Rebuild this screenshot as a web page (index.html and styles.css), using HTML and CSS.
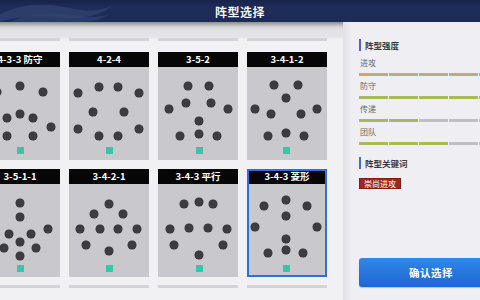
FILE: index.html
```html
<!DOCTYPE html>
<html lang="zh-CN">
<head>
<meta charset="UTF-8">
<meta name="viewport" content="width=device-width, initial-scale=1.0">
<title>阵型选择</title>
<link rel="stylesheet" href="styles.css">
</head>
<body>
<div class="topbar">
    <svg class="topbar-wave" width="140" height="22" viewBox="0 0 140 22">
        <path d="M0 14 C20 4 45 2 70 8 C90 13 100 10 112 6 C100 16 80 20 55 17 C35 15 15 17 0 22 Z" fill="#3a4b77" opacity="0.55"/>
        <path d="M10 22 C30 12 55 12 80 16 C95 18 105 16 110 14 C100 20 90 22 80 22 Z" fill="#33466f" opacity="0.6"/>
    </svg>
    <h1 class="topbar-title">阵型选择</h1>
</div>
<div class="main">
    <div class="formations">
        <div class="shelf-row">
            <div class="shelf"></div><div class="shelf"></div><div class="shelf"></div><div class="shelf"></div>
        </div>
        <div class="grid" id="grid"></div>
        <div class="shelf-row shelf-row-bottom">
            <div class="shelf"></div><div class="shelf"></div><div class="shelf"></div><div class="shelf"></div>
        </div>
    </div>
    <div class="panel">
        <div class="panel-title">阵型强度</div>
        <div class="stat">
            <div class="stat-label">进攻</div>
            <div class="bar bar-attack"><span class="on"></span><span class="on"></span><span class="on"></span><span class="on"></span><span class="on"></span></div>
        </div>
        <div class="stat">
            <div class="stat-label">防守</div>
            <div class="bar"><span class="on"></span><span class="on"></span><span class="on"></span><span class="on"></span><span class="on"></span></div>
        </div>
        <div class="stat">
            <div class="stat-label">传递</div>
            <div class="bar"><span class="on"></span><span class="on"></span><span></span><span></span><span></span></div>
        </div>
        <div class="stat">
            <div class="stat-label">团队</div>
            <div class="bar"><span class="on"></span><span class="on"></span><span class="on"></span><span></span><span></span></div>
        </div>
        <div class="panel-title panel-title-keys">阵型关键词</div>
        <div class="tags"><span class="tag">崇尚进攻</span></div>
        <button class="confirm">确认选择</button>
    </div>
</div>
<script>

var formations = [
    { name: '4-3-3 防守', gk: [40, 98], players: [[17,40],[40,34],[63,40],[27,66],[40,62],[53,66],[9,75],[27,84],[53,84],[71,75]] },
    { name: '4-2-4', gk: [40, 98], players: [[9,41],[30,35],[49,35],[70,41],[24,60],[55,60],[9,77],[30,84],[49,84],[70,77]] },
    { name: '3-5-2', gk: [41, 98], players: [[30,34],[51,34],[28,51],[53,51],[11,57],[70,57],[41,69],[22,84],[41,82],[59,84]] },
    { name: '3-4-1-2', gk: [39, 98], players: [[27,33],[51,33],[39,46],[8,57],[24,62],[54,62],[70,57],[21,84],[39,81],[57,84]] },
    { name: '3-5-1-1', gk: [40, 99], players: [[40,34],[40,48],[12,60],[68,60],[29,65],[51,65],[40,73],[24,79],[56,79],[40,87]] },
    { name: '3-4-2-1', gk: [40, 99], players: [[40,35],[25,45],[54,45],[11,60],[31,60],[49,60],[68,60],[17,76],[63,76],[40,82]] },
    { name: '3-4-3 平行', gk: [41, 99], players: [[26,35],[41,33],[55,35],[12,60],[31,59],[50,59],[69,60],[16,76],[65,76],[41,86]] },
    { name: '3-4-3 菱形', gk: [39, 99], selected: true, players: [[17,37],[39,31],[60,37],[39,47],[8,58],[70,58],[39,70],[21,84],[39,81],[56,84]] }
];

var grid = document.getElementById('grid');

formations.forEach(function(f) {
    var card = document.createElement('div');
    card.className = 'card' + (f.selected ? ' selected' : '');

    var head = document.createElement('div');
    head.className = 'card-head';
    head.textContent = f.name;
    card.appendChild(head);

    var pitch = document.createElement('div');
    pitch.className = 'pitch';

    // positions are measured from the card's top-left, header is 15px
    f.players.forEach(function(p) {
        var dot = document.createElement('span');
        dot.className = 'player';
        dot.style.left = (p[0] - 4) + 'px';
        dot.style.top = (p[1] - 15 - 4) + 'px';
        pitch.appendChild(dot);
    });

    var gk = document.createElement('span');
    gk.className = 'keeper';
    gk.style.left = (f.gk[0] - 3.5) + 'px';
    gk.style.top = (f.gk[1] - 15 - 3.5) + 'px';
    pitch.appendChild(gk);

    card.appendChild(pitch);
    grid.appendChild(card);
});

</script>
</body>
</html>
```
FILE: styles.css
```css
body {
    margin: 0;
    width: 480px;
    height: 300px;
    overflow: hidden;
    font-family: "Noto Sans CJK SC", "Noto Sans", sans-serif;
    background-color: #eeeef1;
    display: flex;
    flex-direction: column;
}

.topbar {
    height: 22px;
    background: linear-gradient(#16234a, #1d2d58 30%, #1c2c57);
    position: relative;
    display: flex;
    align-items: center;
    justify-content: center;
    flex-shrink: 0;
}

.topbar-wave {
    position: absolute;
    left: 0;
    top: 0;
}

.topbar-title {
    margin: 0;
    font-size: 12px;
    font-weight: bold;
    color: #f4f6fb;
    letter-spacing: 0.5px;
    text-shadow: 0 0 2px rgba(0, 0, 0, 0.6);
    position: relative;
}

.main {
    flex: 1;
    display: flex;
    min-height: 0;
}

.formations {
    width: 343px;
    flex-shrink: 0;
    overflow: hidden;
    background: linear-gradient(#8f8d92, #d6d6da 5px, #e2e2e5 8px, #e4e4e7 15px, #f1f1f4 17px);
}

.shelf-row {
    display: flex;
    gap: 9px;
    margin-left: -20px;
    margin-top: 16px;
}

.shelf-row-bottom {
    margin-top: 8px;
}

.shelf {
    width: 80px;
    height: 3px;
    background-color: #d4d4d8;
    flex-shrink: 0;
}

.grid {
    display: grid;
    grid-template-columns: repeat(4, 80px);
    column-gap: 9px;
    row-gap: 9px;
    margin-left: -20px;
    margin-top: 11px;
}

.card {
    height: 108px;
    background-color: #c9c9cd;
    display: flex;
    flex-direction: column;
    position: relative;
}

.card.selected::after {
    content: "";
    position: absolute;
    inset: 0;
    border: 2px solid #2e6fd9;
}

.card-head {
    height: 15px;
    background-color: #060606;
    color: #fff;
    font-size: 9.5px;
    font-weight: bold;
    line-height: 15px;
    text-align: center;
    white-space: nowrap;
}

.pitch {
    flex: 1;
    position: relative;
}

.player {
    position: absolute;
    width: 8px;
    height: 8px;
    border-radius: 50%;
    background-color: #3d3d41;
    box-shadow: 0 0 0 0.5px #2c2c30;
}

.keeper {
    position: absolute;
    width: 7px;
    height: 7px;
    background-color: #36c6a8;
}

.panel {
    flex: 1;
    min-width: 0;
    overflow: hidden;
    background: linear-gradient(90deg, #e1e1e6, #efeff3 9px);
    padding: 17px 0 13px 16px;
    display: flex;
    flex-direction: column;
}

.panel-title {
    font-size: 8.5px;
    font-weight: bold;
    color: #3a3a40;
    line-height: 12px;
    border-left: 2px solid #5d58d6;
    padding-left: 4px;
    margin-bottom: 6px;
}

.panel-title-keys {
    margin-top: 8px;
    border-left-color: #3e6fd0;
    margin-bottom: 9px;
}

.stat {
    height: 23px;
}

.stat-label {
    font-size: 8px;
    color: #666;
    line-height: 12px;
    padding-left: 1px;
}

.bar {
    display: flex;
    gap: 1px;
    margin-top: 4px;
    width: 150px;
}

.bar span {
    width: 29px;
    height: 3px;
    background-color: #bfbfc3;
    flex-shrink: 0;
}

.bar span.on {
    background-color: #a8b85c;
}

.bar-attack span.on {
    background-color: #c9a67c;
}

.tags {
    display: flex;
}

.tag {
    background-color: #9d2727;
    border: 1px solid #7c1c1c;
    color: #fff;
    font-size: 8px;
    line-height: 9px;
    padding: 0 4px;
}

.confirm {
    margin-top: auto;
    width: 144px;
    height: 29px;
    flex-shrink: 0;
    border: none;
    border-radius: 3px;
    background: linear-gradient(#3287e6, #1d66d2);
    box-shadow: 0 1px 1px rgba(0, 0, 0, 0.2);
    color: #fff;
    font-family: "Noto Sans CJK SC", sans-serif;
    font-size: 10.5px;
    font-weight: bold;
    letter-spacing: 0.5px;
    padding: 0;
}
```
